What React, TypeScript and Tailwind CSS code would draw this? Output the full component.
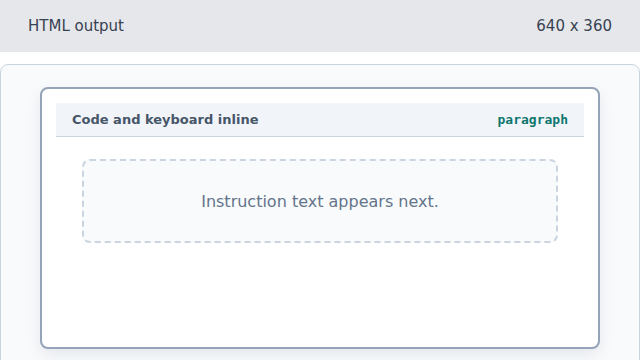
export default function App() {
    return (
        <div className="w-[640px] h-[360px] overflow-hidden bg-white font-['DejaVu_Sans',sans-serif]">
            {/* top bar */}
            <div className="h-[52px] bg-[#e5e7eb] flex items-center justify-between px-[28px] text-[15px] text-[#374151]">
                <span>HTML output</span>
                <span>640 x 360</span>
            </div>

            <div className="pt-[12px]">
                <div className="h-[320px] rounded-t-[8px] border border-[#cbd5e1] bg-[#f8fafc] px-[39px] pt-[22px]">
                    <div className="h-[262px] rounded-[8px] border-2 border-[#94a3b8] bg-white p-[14px] shadow-[0_6px_16px_rgba(15,23,42,0.08)]">
                        <div className="h-[34px] bg-[#f1f5f9] border-b border-[#cbd5e1] flex items-center justify-between px-[16px]">
                            <span className="text-[13px] font-bold text-[#475569]">
                                Code and keyboard inline
                            </span>
                            <span className="font-['DejaVu_Sans_Mono',monospace] text-[13px] font-bold text-[#0f766e]">
                                paragraph
                            </span>
                        </div>
                        <div className="mx-[26px] mt-[22px] h-[84px] pt-[2px] rounded-[8px] border-2 border-dashed border-[#cbd5e1] bg-[#f8fafc] flex items-center justify-center">
                            <span className="text-[16px] text-[#64748b]">Instruction text appears next.</span>
                        </div>
                    </div>
                </div>
            </div>
        </div>
    );
}
